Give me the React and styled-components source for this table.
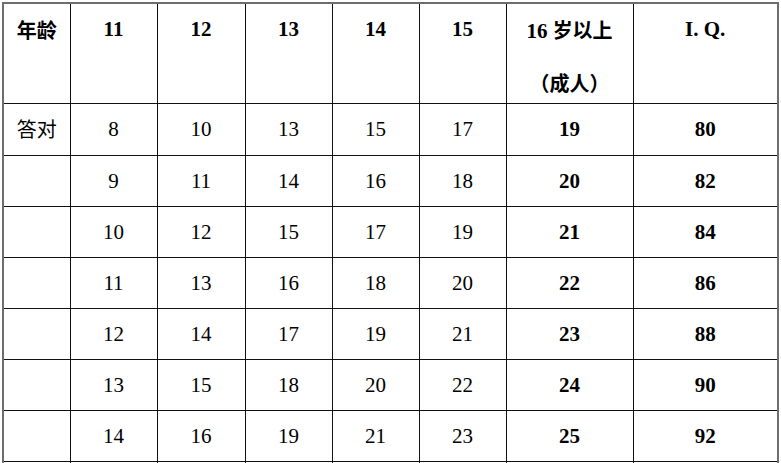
import React from "react";
import styled, { createGlobalStyle } from "styled-components";

const Global = createGlobalStyle`
  html, body { margin: 0; padding: 0; background: #fff; }
  body { overflow: hidden; height: 463px; }
`;

const Page = styled.div`
  padding: 2px 0 0 2px;
`;

const Table = styled.table`
  border-collapse: collapse;
  table-layout: fixed;
  width: 775px;
  border: 2px solid #6e6e6e;
  font-family: "Liberation Serif", "Noto Sans CJK SC", serif;
  font-size: 21px;
  color: #000;
`;

const Cell = styled.td`
  border: 1px solid #111;
  padding: 0;
  line-height: 50px;
  height: 50px;
  text-align: center;
  vertical-align: top;
  font-weight: ${(p) => (p.$bold ? 700 : 400)};
  white-space: nowrap;
`;

const HeadBox = styled.div`
  height: 99px;
  line-height: 51px;
  overflow: visible;
  font-weight: 700;
`;

const Cjk = styled.span`
  font-family: "Noto Sans CJK SC", sans-serif;
  font-size: 20px;
  font-weight: ${(p) => (p.$bold ? 700 : 400)};
`;

const widths = [67, 87, 88, 87, 87, 87, 127, 145];

const rows = [
  [8, 10, 13, 15, 17, 19, 80],
  [9, 11, 14, 16, 18, 20, 82],
  [10, 12, 15, 17, 19, 21, 84],
  [11, 13, 16, 18, 20, 22, 86],
  [12, 14, 17, 19, 21, 23, 88],
  [13, 15, 18, 20, 22, 24, 90],
  [14, 16, 19, 21, 23, 25, 92],
];

export default function App() {
  return (
    <Page>
      <Global />
      <Table>
        <colgroup>
          {widths.map((w, i) => (
            <col key={i} style={{ width: w }} />
          ))}
        </colgroup>
        <thead>
          <tr>
            <Cell>
              <HeadBox>
                <Cjk $bold>年龄</Cjk>
              </HeadBox>
            </Cell>
            {[11, 12, 13, 14, 15].map((a) => (
              <Cell key={a}>
                <HeadBox>{a}</HeadBox>
              </Cell>
            ))}
            <Cell>
              <HeadBox>
                16 <Cjk $bold>岁以上</Cjk>
                <br />
                <Cjk $bold>（成人）</Cjk>
              </HeadBox>
            </Cell>
            <Cell>
              <HeadBox>I. Q.</HeadBox>
            </Cell>
          </tr>
        </thead>
        <tbody>
          {rows.map((r, i) => (
            <tr key={i}>
              <Cell>{i === 0 ? <Cjk>答对</Cjk> : null}</Cell>
              {r.map((v, j) => (
                <Cell key={j} $bold={j >= 5}>
                  {v}
                </Cell>
              ))}
            </tr>
          ))}
          <tr>
            {widths.map((w, i) => (
              <Cell key={i} />
            ))}
          </tr>
        </tbody>
      </Table>
    </Page>
  );
}
